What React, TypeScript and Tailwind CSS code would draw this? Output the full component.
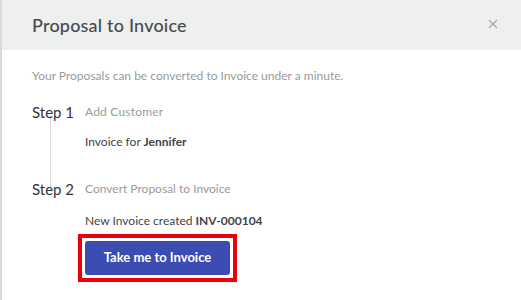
export default function App() {
  return (
    <div className="w-[521px] h-[300px] bg-white overflow-hidden border-l-2 border-[#d9d9d9]" style={{ fontFamily: "Lato, 'Open Sans', sans-serif" }}>
      <div className="h-[50px] bg-[#eeefef] flex items-center justify-between pl-[30px] pr-[23px]">
        <span className="text-[18px] text-[#4a4a4a] font-medium tracking-[0.2px]">Proposal to Invoice</span>
        <svg width="10" height="10" viewBox="0 0 10 10" className="text-[#a5a5a5] -mt-[2px]">
          <path d="M1 1L9 9M9 1L1 9" stroke="currentColor" strokeWidth="1.2" />
        </svg>
      </div>
      <div className="pl-[30px] pt-[18px]">
        <div className="text-[12px] text-[#9a9a9a] leading-[16px]">Your Proposals can be converted to Invoice under a minute.</div>
        <div className="relative mt-[19px]">
          <div className="absolute left-[18px] top-[12px] h-[76px] w-px bg-[#dcdce8]" />
          <div className="flex items-center h-[18px]">
            <span className="w-[53px] text-[15px] text-[#333] relative">Step 1</span>
            <span className="text-[12px] text-[#9a9a9a] tracking-[0.2px]">Add Customer</span>
          </div>
          <div className="ml-[53px] mt-[13px] text-[12px] text-[#444] leading-[16px]">
            Invoice for <span className="font-bold">Jennifer</span>
          </div>
          <div className="flex items-center h-[18px] mt-[30px]">
            <span className="w-[53px] text-[15px] text-[#333] relative">Step 2</span>
            <span className="text-[12px] text-[#9a9a9a]">Convert Proposal to Invoice</span>
          </div>
          <div className="ml-[53px] mt-[15px] text-[12px] text-[#444] leading-[16px]">
            New Invoice created <span className="font-bold">INV-000104</span>
          </div>
          <div className="ml-[46px] mt-[5px] w-[159px] h-[48px] border-[4px] border-[#e8000b] p-[3px]">
            <button className="w-full h-full rounded-[3px] bg-[#3b4db3] text-white text-[13px] font-bold">Take me to Invoice</button>
          </div>
        </div>
      </div>
    </div>
  );
}
